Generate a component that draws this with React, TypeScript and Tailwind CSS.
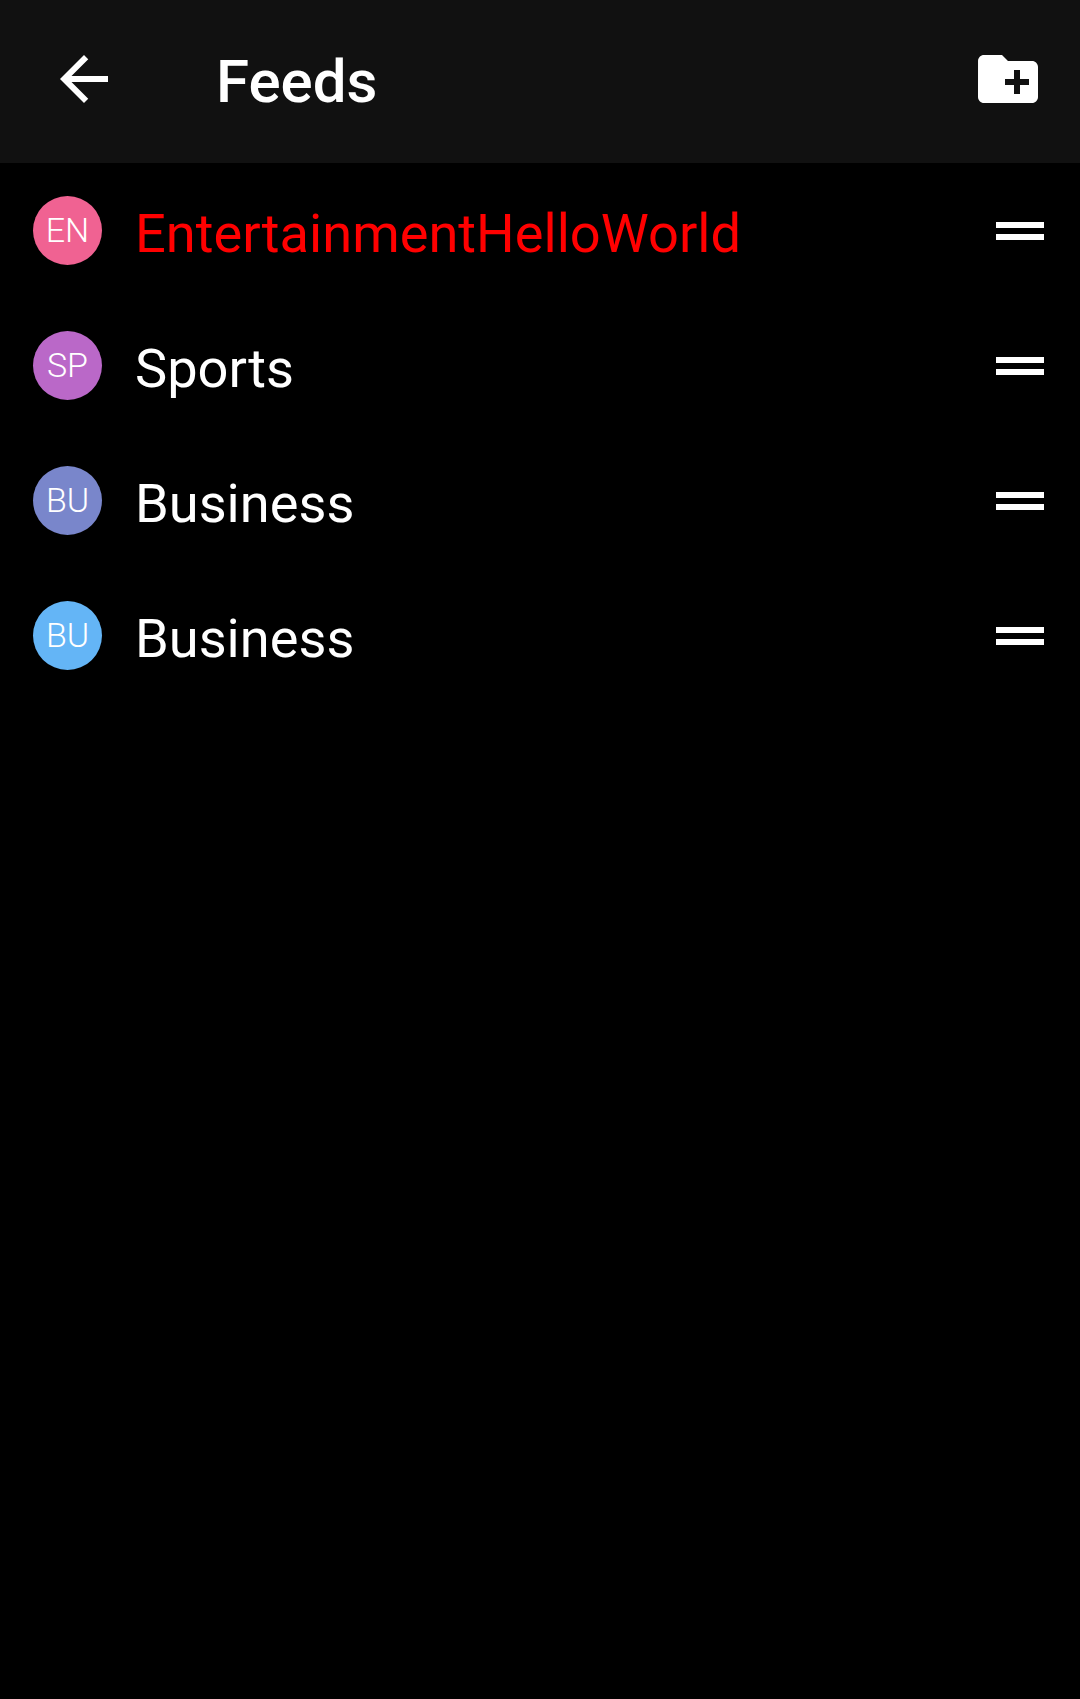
const feeds = [
  { initials: 'EN', name: 'EntertainmentHelloWorld', avatar: 'bg-[#f06292]', text: 'text-[#ff0000]' },
  { initials: 'SP', name: 'Sports', avatar: 'bg-[#ba68c8]', text: 'text-white' },
  { initials: 'BU', name: 'Business', avatar: 'bg-[#7986cb]', text: 'text-white' },
  { initials: 'BU', name: 'Business', avatar: 'bg-[#64b5f6]', text: 'text-white' },
];

const App = () => {
  return (
    <div className="min-h-screen bg-black font-['Roboto',sans-serif] text-white">
      {/* Toolbar */}
      <div className="flex h-[163px] items-center bg-[#111111] pl-12 pr-9 pb-[5px]">
        <svg className="h-[72px] w-[72px]" viewBox="0 0 24 24" fill="#ffffff">
          <path d="M20 11H7.83l5.59-5.59L12 4l-8 8 8 8 1.41-1.41L7.83 13H20v-2z" />
        </svg>
        <div className="ml-24 flex-1 pt-[6px] text-[60px] font-medium leading-[72px]">Feeds</div>
        <svg className="h-[72px] w-[72px]" viewBox="0 0 24 24" fill="#ffffff">
          <path d="M20 6h-8l-2-2H4c-1.11 0-1.99.89-1.99 2L2 18c0 1.11.89 2 2 2h16c1.11 0 2-.89 2-2V8c0-1.11-.89-2-2-2zm-1 8h-3v3h-2v-3h-3v-2h3V9h2v3h3v2z" />
        </svg>
      </div>

      {/* Feed list */}
      <div>
        {feeds.map((feed, index) => (
          <div key={index} className="flex h-[135px] items-center pl-[33px] pr-6">
            <div
              className={`flex h-[69px] w-[69px] shrink-0 items-center justify-center rounded-full text-[34px] font-light ${feed.avatar}`}
            >
              {feed.initials}
            </div>
            <div className={`ml-[33px] flex-1 pt-[6px] text-[54.2px] leading-[64px] ${feed.text}`}>{feed.name}</div>
            <svg className="h-[72px] w-[72px]" viewBox="0 0 24 24" fill="#ffffff">
              <path d="M20 9H4v2h16V9zm0 4H4v2h16v-2z" />
            </svg>
          </div>
        ))}
      </div>
    </div>
  );
};

export default App;
